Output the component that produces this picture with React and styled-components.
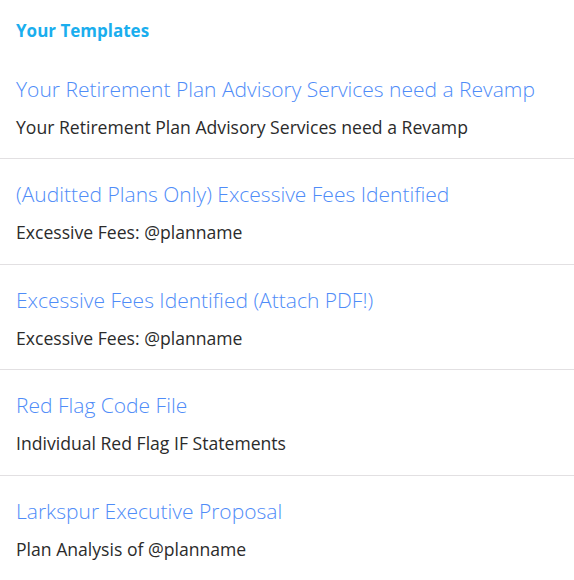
import React from "react";
import styled, { createGlobalStyle } from "styled-components";

const Global = createGlobalStyle`
  body {
    margin: 0;
    background: #ffffff;
    font-family: "Open Sans", "Noto Sans", sans-serif;
  }
`;

const Page = styled.div`
  width: 574px;
`;

const Heading = styled.h2`
  margin: 0;
  padding: 20px 16px 0;
  height: 44px;
  box-sizing: border-box;
  font-size: 17px;
  font-weight: 700;
  line-height: 22px;
  color: #1aaeee;
`;

const List = styled.ul`
  list-style: none;
  margin: 0;
  padding: 0;
`;

const Item = styled.li`
  box-sizing: border-box;
  padding: ${(p) => (p.first ? "31px" : "21px")} 16px 0;
  height: ${(p) => (p.first ? "115px" : "105.5px")};
  border-bottom: ${(p) => (p.last ? "none" : "1px solid #e2e0e2")};
`;

const Title = styled.div`
  font-size: 21px;
  font-weight: 300;
  line-height: 28px;
  color: #4f8cf8;
  white-space: nowrap;
`;

const Subtitle = styled.div`
  margin-top: 12px;
  font-size: 17.6px;
  font-weight: 400;
  line-height: 24px;
  color: #2b2b2b;
  white-space: nowrap;
`;

const templates = [
  {
    title: "Your Retirement Plan Advisory Services need a Revamp",
    subject: "Your Retirement Plan Advisory Services need a Revamp",
  },
  {
    title: "(Auditted Plans Only) Excessive Fees Identified",
    subject: "Excessive Fees: @planname",
  },
  {
    title: "Excessive Fees Identified (Attach PDF!)",
    subject: "Excessive Fees: @planname",
  },
  { title: "Red Flag Code File", subject: "Individual Red Flag IF Statements" },
  { title: "Larkspur Executive Proposal", subject: "Plan Analysis of @planname" },
];

export default function App() {
  return (
    <Page>
      <Global />
      <Heading>Your Templates</Heading>
      <List>
        {templates.map((t, i) => (
          <Item key={i} first={i === 0} last={i === templates.length - 1}>
            <Title>{t.title}</Title>
            <Subtitle>{t.subject}</Subtitle>
          </Item>
        ))}
      </List>
    </Page>
  );
}
